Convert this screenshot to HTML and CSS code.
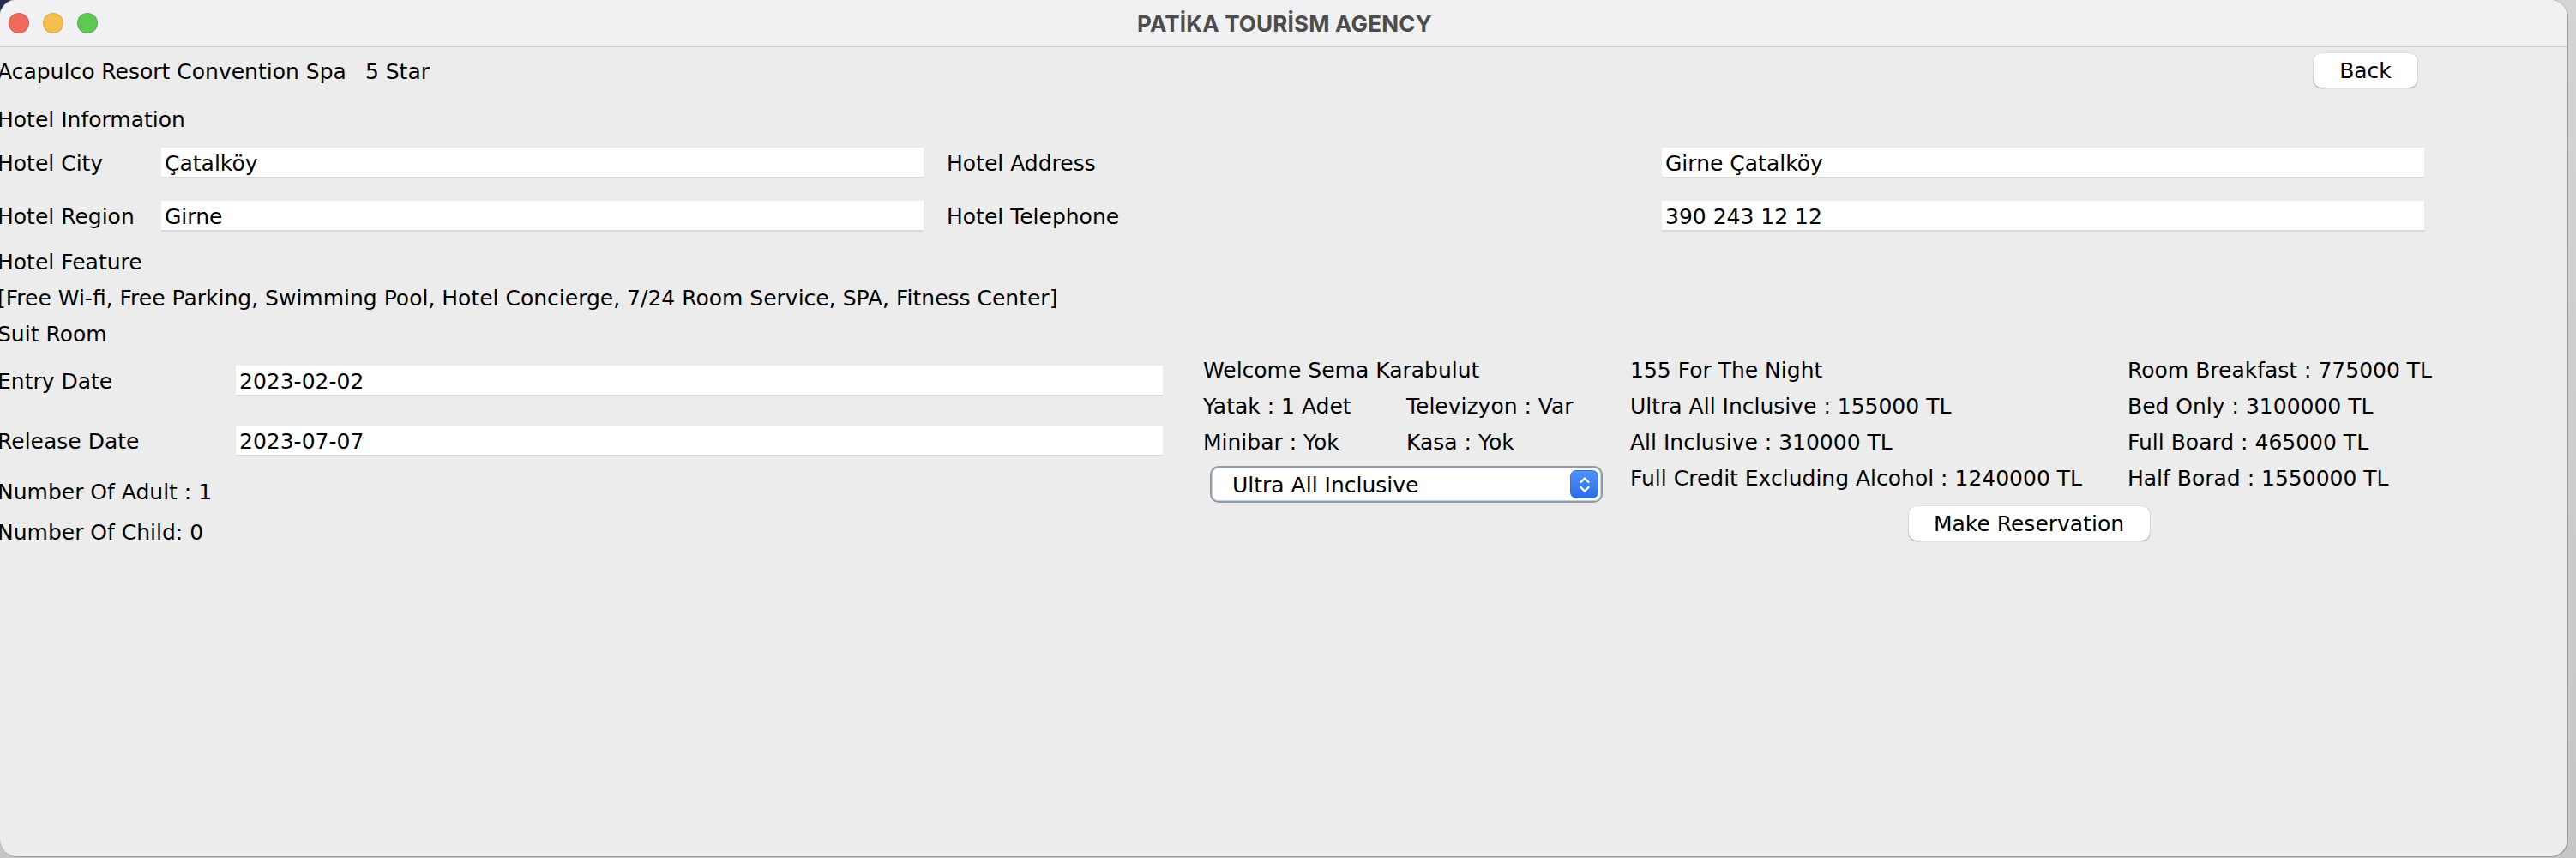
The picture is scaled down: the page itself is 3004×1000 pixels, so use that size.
FILE: index.html
```html
<!DOCTYPE html>
<html lang="tr">
<head>
<meta charset="utf-8">
<title>PATİKA TOURİSM AGENCY</title>
<link rel="stylesheet" href="styles.css">
</head>
<body>
<div class="window">
  <div class="titlebar">
    <div class="lights">
      <span class="light red"></span>
      <span class="light yellow"></span>
      <span class="light green"></span>
    </div>
    <div class="wtitle">PATİKA TOURİSM AGENCY</div>
    <div></div>
  </div>
  <div class="content">
    <div class="header-row">
      <span class="hotel-name">Acapulco Resort Convention Spa</span>
      <span class="stars">5 Star</span>
      <button class="btn back">Back</button>
    </div>
    <div class="line section">Hotel Information</div>
    <div class="info-grid">
      <div class="lbl">Hotel City</div>
      <div class="field">Çatalköy</div>
      <div class="lbl lbl-right">Hotel Address</div>
      <div class="field">Girne Çatalköy</div>
      <div class="lbl">Hotel Region</div>
      <div class="field">Girne</div>
      <div class="lbl lbl-right">Hotel Telephone</div>
      <div class="field">390 243 12 12</div>
    </div>
    <div class="line feature-title">Hotel Feature</div>
    <div class="line">[Free Wi-fi, Free Parking, Swimming Pool, Hotel Concierge, 7/24 Room Service, SPA, Fitness Center]</div>
    <div class="line">Suit Room</div>
    <div class="room">
      <div class="room-left">
        <div class="date-grid">
          <div class="lbl">Entry Date</div>
          <div class="field">2023-02-02</div>
          <div class="lbl">Release Date</div>
          <div class="field">2023-07-07</div>
        </div>
        <div class="count adult">Number Of Adult : 1</div>
        <div class="count child">Number Of Child: 0</div>
      </div>
      <div class="room-right">
        <div class="room-info">
          <div class="line">Welcome Sema Karabulut</div>
          <div class="props">
            <div class="line">Yatak : 1 Adet</div>
            <div class="line">Televizyon : Var</div>
            <div class="line">Minibar : Yok</div>
            <div class="line">Kasa : Yok</div>
          </div>
          <div class="combo">
            <span class="combo-text">Ultra All Inclusive</span>
            <span class="combo-btn">
              <svg width="14" height="22" viewBox="0 0 14 22"><path d="M2.5 8 L7 3.5 L11.5 8" fill="none" stroke="#fff" stroke-width="2.4" stroke-linecap="round" stroke-linejoin="round"/><path d="M2.5 14 L7 18.5 L11.5 14" fill="none" stroke="#fff" stroke-width="2.4" stroke-linecap="round" stroke-linejoin="round"/></svg>
            </span>
          </div>
        </div>
        <div class="prices">
          <div class="line">155 For The Night</div>
          <div class="line">Room Breakfast : 775000 TL</div>
          <div class="line">Ultra All Inclusive : 155000 TL</div>
          <div class="line">Bed Only : 3100000 TL</div>
          <div class="line">All Inclusive : 310000 TL</div>
          <div class="line">Full Board : 465000 TL</div>
          <div class="line">Full Credit Excluding Alcohol : 1240000 TL</div>
          <div class="line">Half Borad : 1550000 TL</div>
          <button class="btn reserve">Make Reservation</button>
        </div>
      </div>
    </div>
  </div>
</div>
</body>
</html>
```
FILE: styles.css
```css
html, body {
  margin: 0;
  padding: 0;
}
body {
  width: 3004px;
  height: 1000px;
  overflow: hidden;
  background: radial-gradient(circle at 0 0, #262b4d 16px, rgba(0,0,0,0) 17px), linear-gradient(#d4d4d4, #c6c6c6);
  font-family: "DejaVu Sans", "Liberation Sans", sans-serif;
  font-size: 25px;
  color: #000;
}
.window {
  width: 2994px;
  height: 998px;
  border-radius: 20px;
  overflow: hidden;
  background: #ececec;
  box-shadow: 1px 1px 0 #9b9b9b, 0 0 0 1px #b9b9b9;
}
.titlebar {
  height: 54px;
  border-bottom: 1px solid #cbcbcb;
  background: #f1f1f3;
  display: grid;
  grid-template-columns: 1fr auto 1fr;
  align-items: center;
}
.lights {
  display: flex;
  gap: 16px;
  padding-left: 10px;
}
.light {
  width: 24px;
  height: 24px;
  border-radius: 50%;
  box-shadow: inset 0 0 0 1px rgba(0,0,0,0.12);
}
.red { background: #ee6a5f; }
.yellow { background: #f5be4f; }
.green { background: #62c655; }
.wtitle {
  font-family: Inter, "Liberation Sans", sans-serif;
  font-weight: 700;
  font-size: 26px;
  color: #4c4c4c;
  letter-spacing: 0.2px;
  margin-left: 2px;
}
.content {
  margin-left: -3px;
}
.header-row {
  display: flex;
  align-items: center;
  height: 40px;
  margin-top: 7px;
  padding-right: 175px;
}
.hotel-name,
.stars {
  padding-top: 2px;
}
.stars {
  margin-left: 22px;
}
.btn {
  font-family: "DejaVu Sans", "Liberation Sans", sans-serif;
  font-size: 25px;
  color: #000;
  background: #fff;
  border: none;
  border-radius: 9px;
  height: 40px;
  padding: 0;
  box-shadow: 0 1px 1.5px rgba(0,0,0,0.28), 0 0 0 0.5px rgba(0,0,0,0.1);
}
.back {
  margin-left: auto;
  width: 121px;
}
.line {
  height: 42px;
  line-height: 44px;
  white-space: nowrap;
}
.section {
  margin-top: 16px;
}
.info-grid {
  display: grid;
  grid-template-columns: 191px 889px 861px 889px;
  grid-auto-rows: 34px;
  row-gap: 28px;
  margin-top: 12px;
}
.lbl {
  height: 34px;
  line-height: 37px;
  white-space: nowrap;
}
.lbl-right {
  padding-left: 27px;
}
.field {
  background: #fff;
  height: 34px;
  line-height: 37px;
  padding-left: 4px;
  box-shadow: 0 2px 0 #d9d9d9;
  white-space: nowrap;
  overflow: hidden;
}
.feature-title {
  margin-top: 16px;
}
.room {
  display: flex;
}
.room-left {
  width: 1359px;
}
.date-grid {
  display: grid;
  grid-template-columns: 278px 1081px;
  grid-auto-rows: 34px;
  row-gap: 36px;
  margin-top: 16px;
}
.date-grid .lbl,
.date-grid .field {
  line-height: 38px;
}
.count {
  height: 38px;
  line-height: 39px;
}
.adult {
  margin-top: 24px;
}
.child {
  margin-top: 9px;
}
.room-right {
  display: flex;
  margin-left: 47px;
}
.room-info {
  width: 498px;
}
.props {
  display: grid;
  grid-template-columns: 237px auto;
}
.combo {
  display: flex;
  align-items: center;
  justify-content: space-between;
  width: 458px;
  height: 43px;
  box-sizing: border-box;
  margin-top: 7px;
  margin-left: 8px;
  background: #fff;
  border: 2px solid #8f9aab;
  border-radius: 10px;
  box-shadow: inset 0 0 0 1px #c9d0da;
  padding: 0 3px 0 24px;
}
.combo-text {
  padding-top: 2px;
}
.combo-btn {
  width: 33px;
  height: 33px;
  box-sizing: border-box;
  border-radius: 7px;
  background: linear-gradient(#4e93f8, #2d6ee6);
  border: 1px solid #3a6fcf;
  display: flex;
  align-items: center;
  justify-content: center;
}
.combo-btn svg {
  display: block;
}
.prices {
  display: grid;
  grid-template-columns: 580px 350px;
  align-content: start;
}
.reserve {
  grid-column: 1 / span 2;
  justify-self: center;
  width: 281px;
  margin-top: 12px;
}
```
